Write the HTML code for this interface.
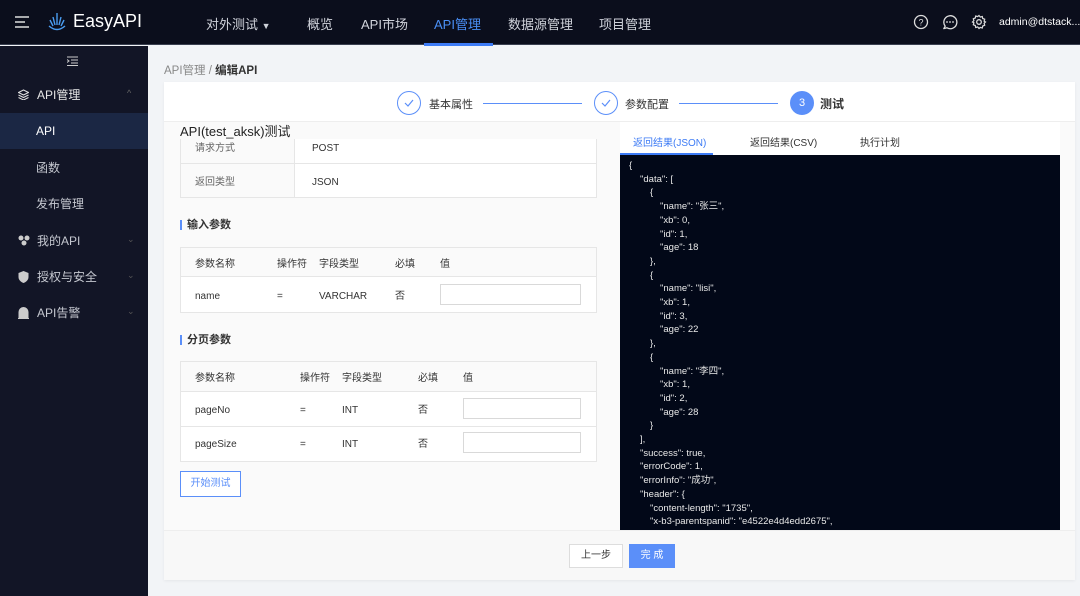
<!DOCTYPE html>
<html><head><meta charset="utf-8"><style>
*{margin:0;padding:0;box-sizing:border-box}
body{width:1080px;height:596px;overflow:hidden;background:#f2f4f7;font-family:"Liberation Sans","Noto Sans CJK SC",sans-serif;font-size:12px;color:#333;position:relative}
.a{position:absolute}
.hdr{left:0;top:0;width:1080px;height:45px;background:#0b0e1c;border-bottom:1px solid #3a4050}
.nav{color:#d0d3db;font-size:13px;top:14px}
.side{left:0;top:46px;width:148px;height:550px;background:#121526}
.si{color:#c5c8d0;font-size:12px;line-height:14px}
.card{left:164px;top:82px;width:911px;height:498px;background:#fafafa;box-shadow:0 1px 3px rgba(0,0,0,.06)}
.tbl{border:1px solid #e6e6e6;background:#fff}
.th{background:#fafafa}
.c{position:absolute;font-size:10px;color:#333;line-height:12px;margin-top:2px}
.inp{position:absolute;border:1px solid #d9d9d9;background:#fff;height:21px}
.code{left:620px;top:155px;width:440px;height:375px;background:#020818;color:#e8e8e8;font-size:9.5px;line-height:13.7px;padding:4px 0 0 9px;overflow:hidden;font-family:"Liberation Sans","Noto Sans CJK SC",sans-serif}
.code div{white-space:pre}
.i1{padding-left:11px}.i2{padding-left:21px}.i3{padding-left:31px}
.circ{width:24px;height:24px;border-radius:50%;border:1px solid #5b8ff9;top:91px}
</style></head><body>
<div class="a hdr"></div>
<svg class="a" style="left:14px;top:15px" width="16" height="14"><path d="M1 2h14M1 7h10M1 12h14" stroke="#ddd" stroke-width="1.6"/></svg>
<svg class="a" style="left:47px;top:11px" width="20" height="22"><path d="M10 2v12M6 6l2 8M14 6l-2 8M3 9l3 6M17 9l-3 6M2 15q8 7 16 0" stroke="#4a9cf0" stroke-width="1.4" fill="none"/></svg>
<div class="a" style="left:73px;top:11px;color:#fff;font-size:18px">EasyAPI</div>
<div class="a nav" style="left:206px">对外测试 <span style="font-size:9px">▼</span></div>
<div class="a nav" style="left:307px">概览</div>
<div class="a nav" style="left:361px">API市场</div>
<div class="a nav" style="left:434px;color:#4a8ff5">API管理</div>
<div class="a" style="left:424px;top:43px;width:69px;height:3px;background:#3d7bf5"></div>
<div class="a nav" style="left:508px">数据源管理</div>
<div class="a nav" style="left:599px">项目管理</div>
<svg class="a" style="left:913px;top:14px" width="16" height="16"><circle cx="8" cy="8" r="6.5" stroke="#ddd" fill="none" stroke-width="1.3"/><text x="8" y="11.5" font-size="9" fill="#ddd" text-anchor="middle" font-family="Liberation Sans">?</text></svg>
<svg class="a" style="left:942px;top:14px" width="16" height="16"><path d="M3.2 12.2A6.5 6.5 0 1 1 5 13.8L1.8 14.6z" stroke="#ddd" fill="none" stroke-width="1.3" stroke-linejoin="round"/><circle cx="5" cy="8" r=".9" fill="#ddd"/><circle cx="8" cy="8" r=".9" fill="#ddd"/><circle cx="11" cy="8" r=".9" fill="#ddd"/></svg>
<svg class="a" style="left:971px;top:14px" width="16" height="16"><circle cx="8" cy="8" r="2.3" stroke="#ddd" fill="none" stroke-width="1.3"/><path d="M8 1.5l1.3 1.6 2-.6.4 2 2 .7-.6 2L14.5 8l-1.4 1.3.6 2-2 .7-.4 2-2-.6L8 14.5l-1.3-1.6-2 .6-.4-2-2-.7.6-2L1.5 8l1.4-1.3-.6-2 2-.7.4-2 2 .6z" stroke="#ddd" fill="none" stroke-width="1.2"/></svg>
<div class="a" style="left:999px;top:16px;color:#fff;font-size:10.5px">admin@dtstack...</div>

<div class="a side"></div>
<svg class="a" style="left:67px;top:56px" width="11" height="10"><path d="M0 1h11M4 4h7M4 7h7M0 9.5h11M0 3.5l2 1.5-2 1.5" stroke="#ccc" stroke-width="1" fill="none"/></svg>
<svg class="a" style="left:18px;top:89px" width="11" height="11"><path d="M5.5 1l5 2.5-5 2.5-5-2.5zM.5 6l5 2.5 5-2.5M.5 8.5l5 2.5 5-2.5" stroke="#ddd" fill="none" stroke-width="1.1"/></svg>
<div class="a si" style="left:37px;top:88px;color:#e6e6e6">API管理</div>
<div class="a" style="left:127px;top:88px;color:#666;font-size:9px">^</div>
<div class="a" style="left:0;top:113px;width:148px;height:36px;background:#1b2744"></div>
<div class="a si" style="left:36px;top:124px;color:#fff">API</div>
<div class="a si" style="left:36px;top:161px">函数</div>
<div class="a si" style="left:36px;top:197px">发布管理</div>
<svg class="a" style="left:18px;top:235px" width="12" height="11"><circle cx="3" cy="3" r="2.5" fill="#ccc"/><circle cx="9" cy="3" r="2.5" fill="#ccc"/><circle cx="6" cy="8" r="2.5" fill="#ccc"/></svg>
<div class="a si" style="left:37px;top:234px">我的API</div>
<svg class="a" style="left:18px;top:271px" width="11" height="12"><path d="M5.5 0l5 2v4c0 3-2.5 5-5 6-2.5-1-5-3-5-6V2z" fill="#ccc"/></svg>
<div class="a si" style="left:37px;top:270px">授权与安全</div>
<svg class="a" style="left:18px;top:307px" width="11" height="12"><path d="M1 11V5a4.5 4.5 0 0 1 9 0v6zM0 11.5h11" stroke="#ccc" fill="#ccc"/></svg>
<div class="a si" style="left:37px;top:306px">API告警</div>
<div class="a" style="left:127px;top:234px;color:#555;font-size:9px">⌄</div>
<div class="a" style="left:127px;top:270px;color:#555;font-size:9px">⌄</div>
<div class="a" style="left:127px;top:306px;color:#555;font-size:9px">⌄</div>

<div class="a" style="left:164px;top:62px;font-size:11.5px;color:#888">API管理 / <b style="color:#333">编辑API</b></div>
<div class="a card"></div>
<div class="a" style="left:164px;top:82px;width:911px;height:40px;background:#fff;border-bottom:1px solid #eee"></div>
<div class="a circ" style="left:397px"></div>
<svg class="a" style="left:403px;top:97px" width="12" height="12"><path d="M2 6l3 3 5-6" stroke="#5b8ff9" fill="none" stroke-width="1.2"/></svg>
<div class="a" style="left:429px;top:96px;font-size:11px">基本属性</div>
<div class="a" style="left:483px;top:103px;width:99px;height:1px;background:#5b8ff9"></div>
<div class="a circ" style="left:594px"></div>
<svg class="a" style="left:600px;top:97px" width="12" height="12"><path d="M2 6l3 3 5-6" stroke="#5b8ff9" fill="none" stroke-width="1.2"/></svg>
<div class="a" style="left:625px;top:96px;font-size:11px">参数配置</div>
<div class="a" style="left:679px;top:103px;width:99px;height:1px;background:#5b8ff9"></div>
<div class="a circ" style="left:790px;background:#5b8ff9;color:#fff;text-align:center;line-height:22px;font-size:11px">3</div>
<div class="a" style="left:820px;top:95px;font-size:12px;font-weight:bold">测试</div>

<div class="a tbl" style="left:180px;top:138px;width:417px;height:60px;border-top:none"></div>
<div class="a" style="left:180px;top:138px;width:114px;height:59px;background:#fafafa;border-left:1px solid #e6e6e6"></div>
<div class="a" style="left:294px;top:138px;width:1px;height:59px;background:#e6e6e6"></div>
<div class="a" style="left:180px;top:163px;width:417px;height:1px;background:#e6e6e6"></div>
<div class="c" style="left:195px;top:141px;color:#666">请求方式</div><div class="c" style="left:312px;top:141px">POST</div>
<div class="c" style="left:195px;top:175px;color:#666">返回类型</div><div class="c" style="left:312px;top:175px">JSON</div>
<div class="a" style="left:164px;top:122px;width:448px;height:17px;background:#fafafa"></div>
<div class="a" style="left:180px;top:124px;font-size:13px;color:#222;line-height:16px">API(test_aksk)测试</div>

<div class="a" style="left:180px;top:220px;width:2px;height:10px;background:#5b8ff9"></div>
<div class="a" style="left:187px;top:219px;font-size:11px;font-weight:bold;line-height:13px">输入参数</div>
<div class="a tbl" style="left:180px;top:247px;width:417px;height:66px"></div>
<div class="a th" style="left:181px;top:248px;width:415px;height:29px;border-bottom:1px solid #e6e6e6"></div>
<div class="c" style="left:195px;top:257px">参数名称</div><div class="c" style="left:277px;top:257px">操作符</div><div class="c" style="left:319px;top:257px">字段类型</div><div class="c" style="left:395px;top:257px">必填</div><div class="c" style="left:440px;top:257px">值</div>
<div class="c" style="left:195px;top:289px">name</div><div class="c" style="left:277px;top:289px">=</div><div class="c" style="left:319px;top:289px">VARCHAR</div><div class="c" style="left:395px;top:289px">否</div>
<div class="inp" style="left:440px;top:284px;width:141px"></div>

<div class="a" style="left:180px;top:335px;width:2px;height:10px;background:#5b8ff9"></div>
<div class="a" style="left:187px;top:334px;font-size:11px;font-weight:bold;line-height:13px">分页参数</div>
<div class="a tbl" style="left:180px;top:361px;width:417px;height:101px"></div>
<div class="a th" style="left:181px;top:362px;width:415px;height:30px;border-bottom:1px solid #e6e6e6"></div>
<div class="a" style="left:181px;top:426px;width:415px;height:1px;background:#e6e6e6"></div>
<div class="c" style="left:195px;top:371px">参数名称</div><div class="c" style="left:300px;top:371px">操作符</div><div class="c" style="left:342px;top:371px">字段类型</div><div class="c" style="left:418px;top:371px">必填</div><div class="c" style="left:463px;top:371px">值</div>
<div class="c" style="left:195px;top:403px">pageNo</div><div class="c" style="left:300px;top:403px">=</div><div class="c" style="left:342px;top:403px">INT</div><div class="c" style="left:418px;top:403px">否</div>
<div class="inp" style="left:463px;top:398px;width:118px"></div>
<div class="c" style="left:195px;top:437px">pageSize</div><div class="c" style="left:300px;top:437px">=</div><div class="c" style="left:342px;top:437px">INT</div><div class="c" style="left:418px;top:437px">否</div>
<div class="inp" style="left:463px;top:432px;width:118px"></div>
<div class="a" style="left:180px;top:471px;width:61px;height:26px;border:1px solid #5b8ff9;background:#fff;color:#5b8ff9;font-size:10px;text-align:center;line-height:24px">开始测试</div>

<div class="a" style="left:620px;top:122px;width:440px;height:33px;background:#fff"></div>
<div class="a" style="left:633px;top:134px;font-size:10px;color:#3d7bf5">返回结果(JSON)</div>
<div class="a" style="left:750px;top:134px;font-size:10px">返回结果(CSV)</div>
<div class="a" style="left:860px;top:134px;font-size:10px">执行计划</div>
<div class="a" style="left:620px;top:153px;width:93px;height:2px;background:#3d7bf5"></div>
<div class="a code">
<div>{</div>
<div class="i1">"data": [</div>
<div class="i2">{</div>
<div class="i3">"name": "张三",</div>
<div class="i3">"xb": 0,</div>
<div class="i3">"id": 1,</div>
<div class="i3">"age": 18</div>
<div class="i2">},</div>
<div class="i2">{</div>
<div class="i3">"name": "lisi",</div>
<div class="i3">"xb": 1,</div>
<div class="i3">"id": 3,</div>
<div class="i3">"age": 22</div>
<div class="i2">},</div>
<div class="i2">{</div>
<div class="i3">"name": "李四",</div>
<div class="i3">"xb": 1,</div>
<div class="i3">"id": 2,</div>
<div class="i3">"age": 28</div>
<div class="i2">}</div>
<div class="i1">],</div>
<div class="i1">"success": true,</div>
<div class="i1">"errorCode": 1,</div>
<div class="i1">"errorInfo": "成功",</div>
<div class="i1">"header": {</div>
<div class="i2">"content-length": "1735",</div>
<div class="i2">"x-b3-parentspanid": "e4522e4d4edd2675",</div>
</div>

<div class="a" style="left:164px;top:530px;width:911px;height:50px;background:#f8f8f8;border-top:1px solid #eee"></div>
<div class="a" style="left:569px;top:544px;width:54px;height:24px;border:1px solid #ddd;background:#fff;font-size:10px;text-align:center;line-height:22px">上一步</div>
<div class="a" style="left:629px;top:544px;width:46px;height:24px;background:#5b8ff9;color:#fff;font-size:10px;text-align:center;line-height:24px">完 成</div>
</body></html>
